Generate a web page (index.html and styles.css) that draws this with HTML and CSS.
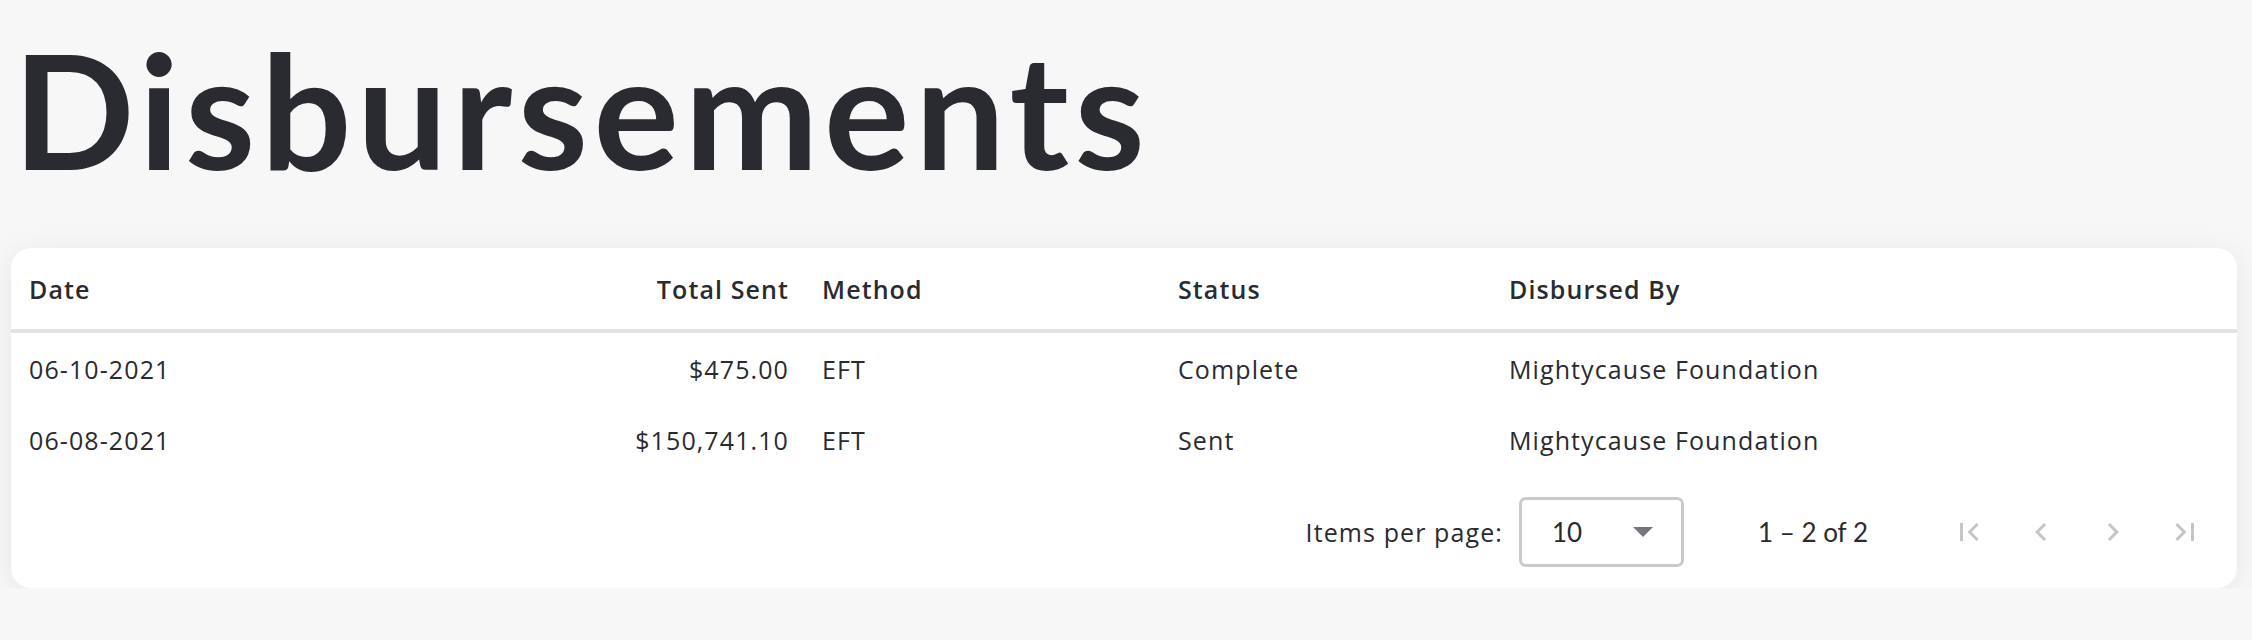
FILE: index.html
```html
<!DOCTYPE html>
<html>
<head>
    <link rel="stylesheet" href="styles.css">
</head>
<body>
    <h1 class="page-title">Disbursements</h1>

    <div class="card">
        <div class="row header-row">
            <div class="cell">Date</div>
            <div class="cell amount">Total Sent</div>
            <div class="cell">Method</div>
            <div class="cell">Status</div>
            <div class="cell">Disbursed By</div>
        </div>
        <div class="row">
            <div class="cell">06-10-2021</div>
            <div class="cell amount">$475.00</div>
            <div class="cell">EFT</div>
            <div class="cell">Complete</div>
            <div class="cell">Mightycause Foundation</div>
        </div>
        <div class="row">
            <div class="cell">06-08-2021</div>
            <div class="cell amount">$150,741.10</div>
            <div class="cell">EFT</div>
            <div class="cell">Sent</div>
            <div class="cell">Mightycause Foundation</div>
        </div>

        <div class="paginator">
            <span class="page-size-label">Items per page:</span>
            <div class="page-size-select">
                <span>10</span>
                <span class="select-arrow"></span>
            </div>
            <span class="range-label">1 &ndash; 2 of 2</span>
            <div class="page-buttons">
                <button class="page-btn" disabled>
                    <svg viewBox="0 0 24 24" width="36" height="36"><path d="M18.41 16.59L13.82 12l4.59-4.59L17 6l-6 6 6 6zM6 6h2v12H6z"/></svg>
                </button>
                <button class="page-btn" disabled>
                    <svg viewBox="0 0 24 24" width="36" height="36"><path d="M15.41 7.41L14 6l-6 6 6 6 1.41-1.41L10.83 12z"/></svg>
                </button>
                <button class="page-btn" disabled>
                    <svg viewBox="0 0 24 24" width="36" height="36"><path d="M10 6L8.59 7.41 13.17 12l-4.58 4.59L10 18l6-6z"/></svg>
                </button>
                <button class="page-btn" disabled>
                    <svg viewBox="0 0 24 24" width="36" height="36"><path d="M5.59 7.41L10.18 12l-4.59 4.59L7 18l6-6-6-6zM16 6h2v12h-2z"/></svg>
                </button>
            </div>
        </div>
    </div>
</body>
</html>
```

FILE: styles.css
```css
body {
    margin: 0;
    padding: 0 15px 0 11px;
    background-color: #f7f7f7;
    font-family: "Open Sans", "Liberation Sans", sans-serif;
    color: #2a2b30;
}

.page-title {
    margin: 0;
    padding: 18px 0 0 2px;
    height: 248px;
    box-sizing: border-box;
    font-family: Lato, "Liberation Sans", sans-serif;
    font-size: 160px;
    line-height: 180px;
    font-weight: 700;
    letter-spacing: 5.5px;
}

.card {
    background-color: #fff;
    border-radius: 20px;
    box-shadow: 0 4px 30px rgba(0, 0, 0, 0.07);
    font-size: 25px;
    letter-spacing: 1.1px;
}

.row {
    display: grid;
    grid-template-columns: 389px 404px 356px 331px 1fr;
    align-items: center;
    height: 71px;
}

.header-row {
    height: 81px;
    font-weight: 600;
    border-bottom: 4px solid #e2e2e2;
}

.cell {
    padding: 0 18px;
    white-space: nowrap;
}

.cell.amount {
    text-align: right;
    padding-right: 15px;
}

.paginator {
    display: flex;
    align-items: center;
    justify-content: flex-end;
    height: 113px;
    padding-right: 16px;
}

.page-size-label {
    margin-right: 16px;
}

.page-size-select {
    display: flex;
    align-items: center;
    justify-content: space-between;
    width: 165px;
    height: 70px;
    box-sizing: border-box;
    padding: 0 28px 0 30px;
    border: 3px solid #c9cacf;
    border-radius: 7px;
    font-family: Lato, "Liberation Sans", sans-serif;
    font-size: 26px;
    letter-spacing: 0;
}

.select-arrow {
    width: 0;
    height: 0;
    border-left: 10px solid transparent;
    border-right: 10px solid transparent;
    border-top: 10px solid #75767c;
}

.range-label {
    margin: 0 65px 0 74px;
    font-family: Lato, "Liberation Sans", sans-serif;
    font-size: 26px;
    letter-spacing: 0;
}

.page-buttons {
    display: flex;
}

.page-btn {
    display: flex;
    align-items: center;
    justify-content: center;
    width: 72px;
    height: 72px;
    padding: 0;
    border: none;
    background: none;
    fill: #c6c6c6;
}
```
